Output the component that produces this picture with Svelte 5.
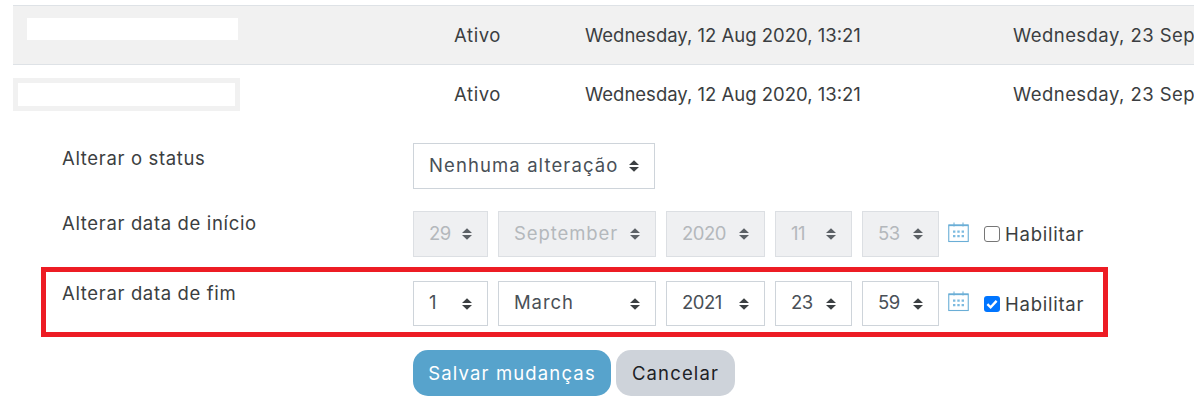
<script>
  const rows = [
    { status: 'Ativo', start: 'Wednesday, 12 Aug 2020, 13:21', end: 'Wednesday, 23 Sep 2020, 13:21', masked: 'plain' },
    { status: 'Ativo', start: 'Wednesday, 12 Aug 2020, 13:21', end: 'Wednesday, 23 Sep 2020, 13:21', masked: 'framed' }
  ];

  const startDate = [
    { value: '29', cls: 'day' },
    { value: 'September', cls: 'month' },
    { value: '2020', cls: 'year' },
    { value: '11', cls: 'hour' },
    { value: '53', cls: 'minute' }
  ];
  const endDate = [
    { value: '1', cls: 'day' },
    { value: 'March', cls: 'month' },
    { value: '2021', cls: 'year' },
    { value: '23', cls: 'hour' },
    { value: '59', cls: 'minute' }
  ];
</script>

{#snippet caret()}
  <svg class="caret" viewBox="0 0 10 12" aria-hidden="true">
    <path d="M5 0.3 L10 5 H0 Z M5 11.7 L0 7 H10 Z" />
  </svg>
{/snippet}

{#snippet calendar()}
  <svg class="calendar" viewBox="0 0 21 21" aria-hidden="true">
    <rect x="0.75" y="3" width="19.5" height="16.5" fill="none" stroke="#6aaed6" stroke-width="1.1" />
    <path d="M0.75 3.4 H20.25" stroke="#6aaed6" stroke-width="1.5" />
    <path d="M6 0.5 V4.5 M15 0.5 V4.5" stroke="#6aaed6" stroke-width="1" />
    <path d="M5 8.5 h2.4 v2.2 h-2.4 z M9.3 8.5 h2.4 v2.2 h-2.4 z M13.6 8.5 h2.4 v2.2 h-2.4 z M5 13 h2.4 v2.2 h-2.4 z M9.3 13 h2.4 v2.2 h-2.4 z M13.6 13 h2.4 v2.2 h-2.4 z" fill="#7dbbe0" />
  </svg>
{/snippet}

{#snippet dateFields(fields, disabled)}
  {#each fields as field}
    <div class="select {field.cls}" class:disabled>
      <span>{field.value}</span>
      {@render caret()}
    </div>
  {/each}
  {@render calendar()}
{/snippet}

<main class="page">
  <section class="table">
    {#each rows as row, i}
      <div class="row" class:striped={i === 0}>
        <div class="name"><span class="mask {row.masked}"></span></div>
        <div class="status-cell">{row.status}</div>
        <div>{row.start}</div>
        <div class="end">{row.end}</div>
      </div>
    {/each}
  </section>

  <form class="form" on:submit|preventDefault>
    <div class="group status">
      <div class="label">Alterar o status</div>
      <div class="controls">
        <div class="select wide">
          <span>Nenhuma alteração</span>
          {@render caret()}
        </div>
      </div>
    </div>

    <div class="group start">
      <div class="label">Alterar data de início</div>
      <div class="controls">
        {@render dateFields(startDate, true)}
        <label class="enable">
          <span class="box"></span>
          Habilitar
        </label>
      </div>
    </div>

    <div class="group highlight">
      <div class="label">Alterar data de fim</div>
      <div class="controls">
        {@render dateFields(endDate, false)}
        <label class="enable">
          <span class="box checked">
            <svg viewBox="0 0 16 16" aria-hidden="true">
              <path d="M3.4 8.2 L6.6 11.3 L12.6 4.9" fill="none" stroke="#fff" stroke-width="2.4" />
            </svg>
          </span>
          Habilitar
        </label>
      </div>
    </div>

    <div class="actions">
      <button type="submit" class="btn primary">Salvar mudanças</button>
      <button type="button" class="btn secondary">Cancelar</button>
    </div>
  </form>
</main>

<style>
  :global(body) {
    margin: 0;
    background: #fff;
    overflow: hidden;
  }

  .page {
    width: 1194px;
    height: 414px;
    overflow: hidden;
    padding-top: 5px;
    box-sizing: border-box;
    font-family: Inter, "Open Sans", sans-serif;
    font-size: 18.5px;
    color: #3b3e41;
  }

  .table {
    margin-left: 13px;
  }

  .row {
    box-sizing: border-box;
    display: grid;
    grid-template-columns: 441px 131px 428px 400px;
    align-items: center;
    height: 59px;
    border-top: 1px solid #dee2e6;
    white-space: nowrap;
  }
  .row.striped {
    background: #f1f1f1;
  }
  .row + .row {
    height: 58px;
  }
  .status-cell {
    letter-spacing: 0.6px;
  }
  .end {
    letter-spacing: 0.45px;
  }

  .name {
    display: flex;
  }
  .mask {
    display: block;
    background: #fff;
  }
  .mask.plain {
    width: 211px;
    height: 22px;
    margin: 0 0 12px 14px;
  }
  .mask.framed {
    width: 217px;
    height: 23px;
    border: 5px solid #f1f1f1;
    margin-top: 2px;
  }

  .form {
    display: flex;
    flex-direction: column;
  }

  .group {
    display: flex;
    align-items: flex-start;
    padding-left: 62px;
  }
  .group.status {
    margin-top: 21px;
  }
  .group.start {
    margin-top: 22px;
  }
  .group.highlight {
    box-sizing: border-box;
    width: 1067px;
    height: 70px;
    margin: 10px 0 0 41px;
    padding: 9px 0 0 16px;
    border: 5px solid #ed1c24;
  }

  .label {
    width: 351px;
    flex: none;
    line-height: 24px;
    letter-spacing: 0.65px;
  }
  .group.status .label {
    line-height: 30px;
  }

  .controls {
    display: flex;
    align-items: center;
    gap: 10px;
  }

  .select {
    box-sizing: border-box;
    height: 46px;
    display: flex;
    align-items: center;
    justify-content: space-between;
    padding: 0 15px;
    border: 1px solid #ced4da;
    background: #fff;
    color: #495057;
    white-space: nowrap;
    letter-spacing: -0.5px;
  }
  .select span {
    margin-top: -2px;
  }
  .group.highlight .select {
    height: 45px;
  }
  .group.highlight .select span {
    margin-top: -3px;
  }
  .select.disabled {
    background: #eff0f2;
    border-color: #dcdfe3;
    color: #b4b8bc;
  }
  .select.disabled .caret {
    fill: #5c6166;
  }
  .select.wide {
    width: 242px;
    letter-spacing: 1.1px;
  }
  .day { width: 75px; }
  .month { width: 158px; letter-spacing: 0.9px; }
  .year { width: 99px; }
  .hour { width: 77px; }
  .minute { width: 77px; }

  .caret {
    width: 10px;
    height: 12px;
    flex: none;
    fill: #3c4043;
  }

  .calendar {
    width: 21px;
    height: 21px;
    flex: none;
    margin: -4px 0 0 -1px;
  }

  .enable {
    display: flex;
    align-items: center;
    gap: 5px;
    margin-left: 5px;
    letter-spacing: 0.75px;
  }

  .box {
    box-sizing: border-box;
    width: 16px;
    height: 16px;
    border: 1px solid #767676;
    border-radius: 3px;
    background: #fff;
  }
  .box.checked {
    border: 0;
    background: #0075ff;
  }
  .box svg {
    display: block;
  }

  .actions {
    display: flex;
    gap: 5px;
    margin: 13px 0 0 413px;
  }

  .btn {
    height: 46px;
    padding: 0 8px;
    border: 0;
    border-radius: 15px;
    font: inherit;
    letter-spacing: 1.15px;
  }
  .btn.primary {
    width: 198px;
    background: #57a3cc;
    color: #fff;
  }
  .btn.secondary {
    width: 119px;
    background: #ced3da;
    color: #1d2125;
  }
</style>
